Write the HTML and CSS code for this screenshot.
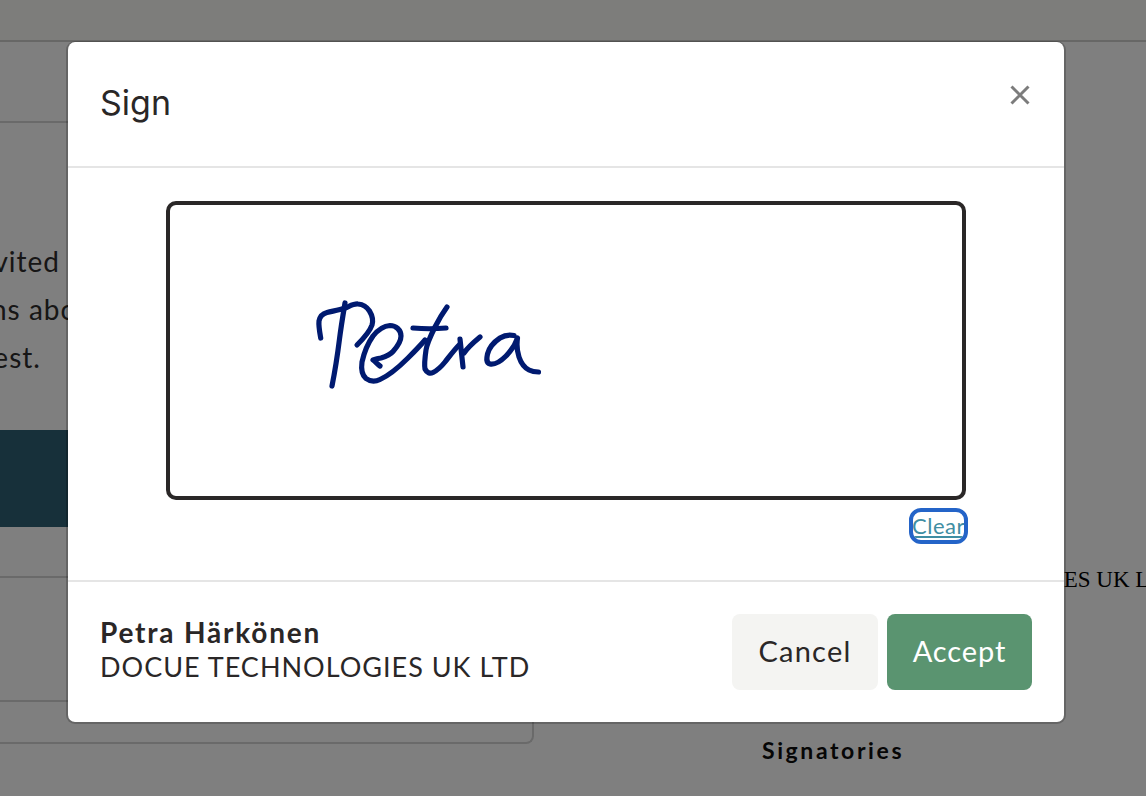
FILE: index.html
```html
<!DOCTYPE html>
<html lang="en">
<head>
<meta charset="utf-8">
<title>Sign</title>
<link rel="stylesheet" href="styles.css">
</head>
<body>
<div class="page">
  <header class="topbar"><h1 class="topbar-title">Signing</h1></header>
  <div class="columns">
    <main class="panel">
      <div class="panel-head"></div>
      <div class="intro">
        <p class="intro-line line-a">You have been invited</p>
        <p class="intro-line line-b">If you have questions about</p>
        <p class="intro-line line-c">this request.</p>
      </div>
      <div class="banner"></div>
      <div class="panel-row row-a"></div>
      <div class="panel-row row-b"></div>
    </main>
    <aside class="side">
      <p class="side-company">DOCUE TECHNOLOGIES UK LTD</p>
      <h2 class="side-title">Signatories</h2>
    </aside>
  </div>
</div>
<div class="overlay"></div>
<section class="modal">
  <header class="modal-head">
    <h2 class="modal-title">Sign</h2>
    <button class="close" aria-label="Close">
      <svg width="20" height="20" viewBox="0 0 20 20"><path d="M1.5 1.5L18.500 18.500M18.500 1.500L1.500 18.500" fill="none" stroke="#7c7c7c" stroke-width="3"/></svg>
    </button>
  </header>
  <div class="modal-body">
    <div class="canvas">
      <svg class="signature" viewBox="170 205 792 290">
        <g fill="none" stroke="#001a70" stroke-width="5.200" stroke-linecap="round" stroke-linejoin="round">
          <path d="M320.700 338C319.500 331 318.500 326 319 321C320 316 323 313.500 327 312.500C333 311 339 310 345 308C350 306 354 303.500 358 304C363 304.500 367 307 369.500 311C372.500 316 373.500 320 372 325C370 331 365 337 357 345"/>
          <path d="M345 303C343 315 341 327 339.500 339C337.500 355 335 371 332 386"/>
          <path d="M380 366C377 364 375 361 373 360C376 359 378 358.500 381 358C386 356.500 390 355 393 351.500C397 347 401 342 401 336C401 330 396 325.500 390 325.500C383 326 377 331 373 336C368 343 364 353 362 362C361 369 362 375 366 378.500C370 381.500 375 382 380 379.500C390 375 400 366 408 358C414 352 420 346 425 340"/>
          <path d="M413 328C424 329 435 329 446 328"/>
          <path d="M447 307C442 314 438 321 435 327C431 335 427 343 426 350C425 357 424 364 425 369C427 373 430 374 433 372.500C438 370 441 367 445 362C449 357 454 350 460 344"/>
          <path d="M460 339C461 348 462 358 463 367M464 353C468 347 474 342 480 337"/>
          <path d="M514 335.500C509 334.500 504 335.500 500 338C494 342 489 348 487.500 354C486.500 359 486 363 490 364C495 365 501 361 506 356C511 351 515 345 517.500 338C516.500 345 517 351 519 357C521 363 525 368 529 370C532 371.500 535 372 538.500 372"/>
        </g>
      </svg>
    </div>
    <div class="clear-row"><a class="clear" href="#">Clear</a></div>
  </div>
  <footer class="modal-foot">
    <div class="signer">
      <div class="signer-name">Petra Härkönen</div>
      <div class="signer-org">DOCUE TECHNOLOGIES UK LTD</div>
    </div>
    <div class="actions">
      <button class="btn btn-cancel">Cancel</button>
      <button class="btn btn-accept">Accept</button>
    </div>
  </footer>
</section>
</body>
</html>
```
FILE: styles.css
```css
* { box-sizing: border-box; }
html, body { margin: 0; height: 100%; }
body {
  position: relative;
  width: 1146px;
  height: 796px;
  overflow: hidden;
  background: #fff;
  color: #2a2727;
  font-family: Lato, "Open Sans", sans-serif;
}
.page { display: flex; flex-direction: column; height: 796px; overflow: hidden; }

.topbar {
  flex: none;
  height: 42px;
  overflow: hidden;
  background: #fbfbf7;
  border-bottom: 2px solid #cfcfcd;
  text-align: center;
}
.topbar-title {
  margin: -31px 0 0;
  font-size: 28px;
  line-height: 28px;
  font-weight: 700;
  color: #222;
}
.columns { display: flex; flex: 1; }
.panel {
  flex: none;
  width: 534px;
  height: 702px;
  border-right: 2px solid #d4d4d4;
  border-bottom: 2px solid #d4d4d4;
  border-bottom-right-radius: 8px;
}
.panel-head { height: 81px; border-bottom: 2px solid #d4d4d4; }
.intro { height: 307px; padding-top: 114px; }
.intro-line {
  margin: 0;
  height: 48px;
  line-height: 48px;
  font-size: 28px;
  letter-spacing: 1px;
  white-space: nowrap;
  color: #2e2c2c;
}
.line-a { margin-left: -231px; }
.line-b { margin-left: -260px; }
.line-c { margin-left: -123px; }
.banner { height: 97px; background: #2e6074; }
.panel-row { border-bottom: 2px solid #d4d4d4; }
.row-a { height: 51px; }
.row-b { height: 124px; }

.side { flex: 1; position: relative; min-width: 0; padding-left: 228px; }
.side-company {
  margin: 524px 0 0 69px;
  font-family: "Liberation Serif", serif;
  font-size: 23px;
  line-height: 28px;
  color: #000;
  white-space: nowrap;
}
.side-title {
  margin: 143px 0 0;
  font-size: 23px;
  line-height: 26px;
  font-weight: 700;
  letter-spacing: 2.600px;
  color: #0c0c0c;
}

.overlay { position: absolute; inset: 0; background: rgba(0, 0, 0, .5); }

.modal {
  position: absolute;
  left: 66px;
  top: 41px;
  width: 1000px;
  height: 683px;
  display: flex;
  flex-direction: column;
  background: #fff;
  background-clip: padding-box;
  border: 1px solid rgba(0, 0, 0, .2);
  border-left-width: 2px;
  border-right-width: 2px;
  border-bottom-width: 2px;
  border-radius: 9px;
}
.modal-head {
  flex: none;
  height: 126px;
  display: flex;
  justify-content: space-between;
  align-items: flex-start;
  padding: 40px 34px 0 32px;
  border-bottom: 2px solid #e5e5e5;
}
.modal-title {
  margin: 0;
  font-family: Inter, Roboto, sans-serif;
  font-size: 34px;
  line-height: 42px;
  font-weight: 400;
  color: #2a2727;
}
.close {
  display: flex;
  padding: 0;
  margin-top: 3px;
  border: 0;
  background: none;
}
.modal-body {
  flex: none;
  height: 414px;
  display: flex;
  flex-direction: column;
  align-items: flex-start;
  padding: 33px 0 0 98px;
  border-bottom: 2px solid #e5e5e5;
}
.canvas {
  width: 800px;
  height: 299px;
  border: 4px solid #2a2727;
  border-radius: 10px;
}
.signature { display: block; width: 792px; height: 290px; }
.clear-row { width: 802px; display: flex; justify-content: flex-end; margin-top: 8px; }
.clear {
  width: 59px;
  height: 36px;
  overflow: hidden;
  border: 4px solid #2464c8;
  border-radius: 12px;
  color: #3f8ea3;
  font-size: 22px;
  line-height: 28px;
  letter-spacing: .5px;
  text-indent: -1px;
  white-space: nowrap;
}
.modal-foot {
  flex: 1;
  display: flex;
  justify-content: space-between;
  align-items: flex-start;
  padding: 32px 32px 0 32px;
}
.signer { padding-top: 1px; }
.signer-name { font-size: 28px; line-height: 35px; font-weight: 700; letter-spacing: 1.800px; color: #2a2727; }
.signer-org { font-size: 27px; line-height: 34px; letter-spacing: 1px; color: #2a2727; }
.actions { display: flex; gap: 9px; }
.btn {
  width: 146px;
  height: 76px;
  padding: 0 0 4px;
  border: 0;
  border-radius: 8px;
  font-family: inherit;
  font-size: 29px;
  letter-spacing: 1.200px;
}
.btn-cancel { background: #f4f4f2; color: #2a2727; }
.btn-accept { width: 145px; background: #5a9470; color: #fff; letter-spacing: .9px; }
```
